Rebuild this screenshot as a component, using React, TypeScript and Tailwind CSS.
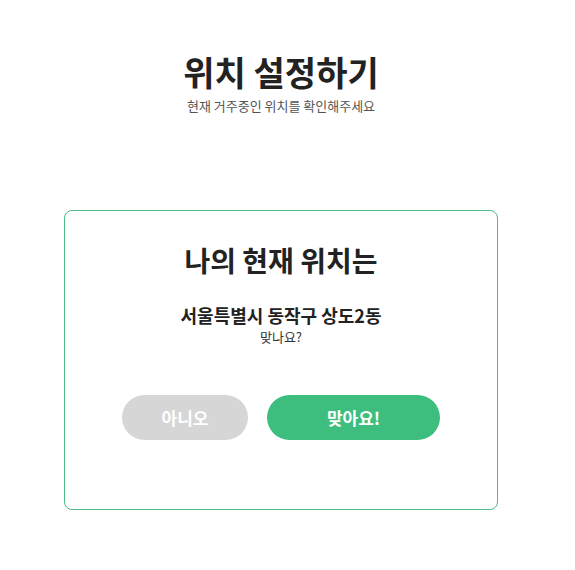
export default function App() {
  return (
    <div
      className="w-[562px] min-h-[570px] bg-white flex flex-col items-center"
      style={{ fontFamily: '"Noto Sans CJK KR", "Noto Sans", sans-serif' }}
    >
      {/* Header */}
      <h1 className="mt-[50px] text-[34px] leading-[44px] font-bold text-[#222]">
        위치 설정하기
      </h1>
      <p className="mt-[3px] text-[13px] leading-[18px] text-[#555]">
        현재 거주중인 위치를 확인해주세요
      </p>

      {/* Card */}
      <div className="mt-[95px] w-[434px] h-[300px] rounded-[8px] border border-[#4cbb84] flex flex-col items-center">
        <h2 className="mt-[30px] text-[28px] leading-[38px] font-bold text-[#222]">
          나의 현재 위치는
        </h2>
        <p className="mt-[23px] text-[18px] leading-[26px] font-bold text-[#222]">
          서울특별시 동작구 상도2동
        </p>
        <p className="text-[13px] leading-[18px] text-[#333]">맞나요?</p>
        <div className="mt-[49px] flex gap-[19px]">
          <button className="w-[126px] h-[45px] rounded-full bg-[#d6d6d6] text-white text-[17px] font-bold">
            아니오
          </button>
          <button className="w-[173px] h-[45px] rounded-full bg-[#3dbe7e] text-white text-[17px] font-bold">
            맞아요!
          </button>
        </div>
      </div>
    </div>
  );
}
